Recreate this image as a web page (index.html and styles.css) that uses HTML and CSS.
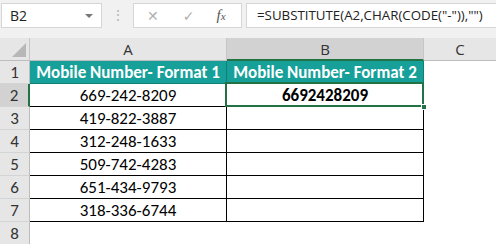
FILE: index.html
```html
<!DOCTYPE html>
<html lang="en">
<head>
    <meta charset="UTF-8">
    <title>SUBSTITUTE</title>
    <link rel="stylesheet" href="styles.css">
</head>
<body>
    <div class="formula-bar">
        <div class="name-box">
            <span>B2</span>
            <span class="caret"></span>
        </div>
        <div class="grip">&#8942;</div>
        <div class="fx-box">
            <span class="fx-icon cancel">&#10005;</span>
            <span class="fx-icon enter">&#10003;</span>
            <span class="fx-icon fx"><i>f</i><i class="x">x</i></span>
        </div>
        <div class="formula-input">=SUBSTITUTE(A2,CHAR(CODE("-")),"")</div>
    </div>

    <div class="sheet">
        <div class="hdr corner"><span class="tri"></span></div>
        <div class="hdr col">A</div>
        <div class="hdr col active">B</div>
        <div class="hdr col last">C</div>

        <div class="hdr row">1</div>
        <div class="cell title">Mobile Number- Format 1</div>
        <div class="cell title">Mobile Number- Format 2</div>
        <div class="blank"></div>

        <div class="hdr row active">2</div>
        <div class="cell">669-242-8209</div>
        <div class="cell result selected">6692428209<span class="handle"></span></div>
        <div class="blank"></div>

        <div class="hdr row">3</div>
        <div class="cell">419-822-3887</div>
        <div class="cell"></div>
        <div class="blank"></div>

        <div class="hdr row">4</div>
        <div class="cell">312-248-1633</div>
        <div class="cell"></div>
        <div class="blank"></div>

        <div class="hdr row">5</div>
        <div class="cell">509-742-4283</div>
        <div class="cell"></div>
        <div class="blank"></div>

        <div class="hdr row">6</div>
        <div class="cell">651-434-9793</div>
        <div class="cell"></div>
        <div class="blank"></div>

        <div class="hdr row">7</div>
        <div class="cell">318-336-6744</div>
        <div class="cell"></div>
        <div class="blank"></div>

        <div class="hdr row">8</div>
        <div class="blank"></div>
        <div class="blank"></div>
        <div class="blank"></div>
    </div>
</body>
</html>
```

FILE: styles.css
```css
body {
    margin: 0;
    width: 496px;
    height: 244px;
    overflow: hidden;
    background-color: #ffffff;
    font-family: Carlito, Lato, "Liberation Sans", sans-serif;
}

/* formula bar */
.formula-bar {
    display: flex;
    align-items: flex-start;
    height: 38px;
    padding-top: 3px;
    box-sizing: border-box;
    background-color: #f1f1f1;
}

.name-box {
    display: flex;
    align-items: center;
    justify-content: space-between;
    width: 101px;
    height: 25px;
    margin-left: 1px;
    padding: 0 8px 0 8px;
    box-sizing: border-box;
    background-color: #ffffff;
    border: 1px solid #d6d6d6;
    font-family: "Open Sans", "Noto Sans", sans-serif;
    font-size: 14px;
    color: #222;
}

.caret {
    width: 0;
    height: 0;
    border-left: 4px solid transparent;
    border-right: 4px solid transparent;
    border-top: 4px solid #777;
}

.grip {
    width: 31px;
    text-align: center;
    color: #b5b5b5;
    font-size: 14px;
    line-height: 25px;
}

.fx-box {
    display: flex;
    align-items: center;
    width: 109px;
    height: 25px;
    box-sizing: border-box;
    background-color: #ffffff;
    border: 1px solid #d6d6d6;
}

.fx-icon {
    color: #b0b0b0;
    font-family: "DejaVu Sans", sans-serif;
    font-size: 14px;
}

.cancel {
    margin-left: 13px;
}

.enter {
    margin-left: 24px;
}

.fx {
    margin-left: 22px;
    color: #555;
    font-family: "Liberation Serif", serif;
    font-size: 15px;
}

.fx .x {
    font-size: 11px;
}

.formula-input {
    flex: 1;
    height: 25px;
    margin-left: 4px;
    padding-left: 10px;
    box-sizing: border-box;
    background-color: #ffffff;
    border: 1px solid #d6d6d6;
    border-right: none;
    font-family: "Open Sans", "Noto Sans", sans-serif;
    font-size: 13.3px;
    line-height: 23px;
    color: #222;
    white-space: nowrap;
}

/* grid */
.sheet {
    display: grid;
    grid-template-columns: 30px 197px 197px 1fr;
    grid-auto-rows: 23px;
}

.sheet > div {
    box-sizing: border-box;
}

.hdr {
    background-color: #e6e6e6;
    color: #333;
    font-size: 17px;
    display: flex;
    align-items: center;
    justify-content: center;
}

.col {
    border-right: 1px solid #c6c6c6;
    border-bottom: 1px solid #bdbdbd;
    font-family: "Open Sans", "Noto Sans", sans-serif;
    font-size: 15px;
}

.col.last {
    border-right: none;
}

.col.active {
    background-color: #d2d2d2;
    border-bottom: 2px solid #217346;
}

.corner {
    position: relative;
    border-right: 1px solid #c6c6c6;
    border-bottom: 1px solid #bdbdbd;
}

.tri {
    position: absolute;
    right: 3px;
    bottom: 3px;
    width: 0;
    height: 0;
    border-left: 14px solid transparent;
    border-bottom: 14px solid #b7b7b7;
}

.row {
    border-right: 1px solid #bdbdbd;
    border-bottom: 1px solid #d4d4d4;
}

.row.active {
    background-color: #d2d2d2;
    border-right: 2px solid #217346;
}

.cell {
    position: relative;
    display: flex;
    align-items: center;
    justify-content: center;
    border-right: 1px solid #000;
    border-bottom: 1px solid #000;
    font-size: 17px;
    color: #000;
}

.cell.title {
    background-color: #16a099;
    color: #ffffff;
    font-weight: bold;
    border-color: #0f7f79;
}

.cell.result {
    font-weight: bold;
}

.selected::after {
    content: "";
    position: absolute;
    left: -2px;
    top: -2px;
    right: -1px;
    bottom: -1px;
    border: 2px solid #217346;
}

.handle {
    position: absolute;
    right: -4px;
    bottom: -4px;
    width: 6px;
    height: 6px;
    background-color: #217346;
    border: 1px solid #ffffff;
    box-sizing: border-box;
    z-index: 2;
}

.blank {
    background-color: #ffffff;
}
```
